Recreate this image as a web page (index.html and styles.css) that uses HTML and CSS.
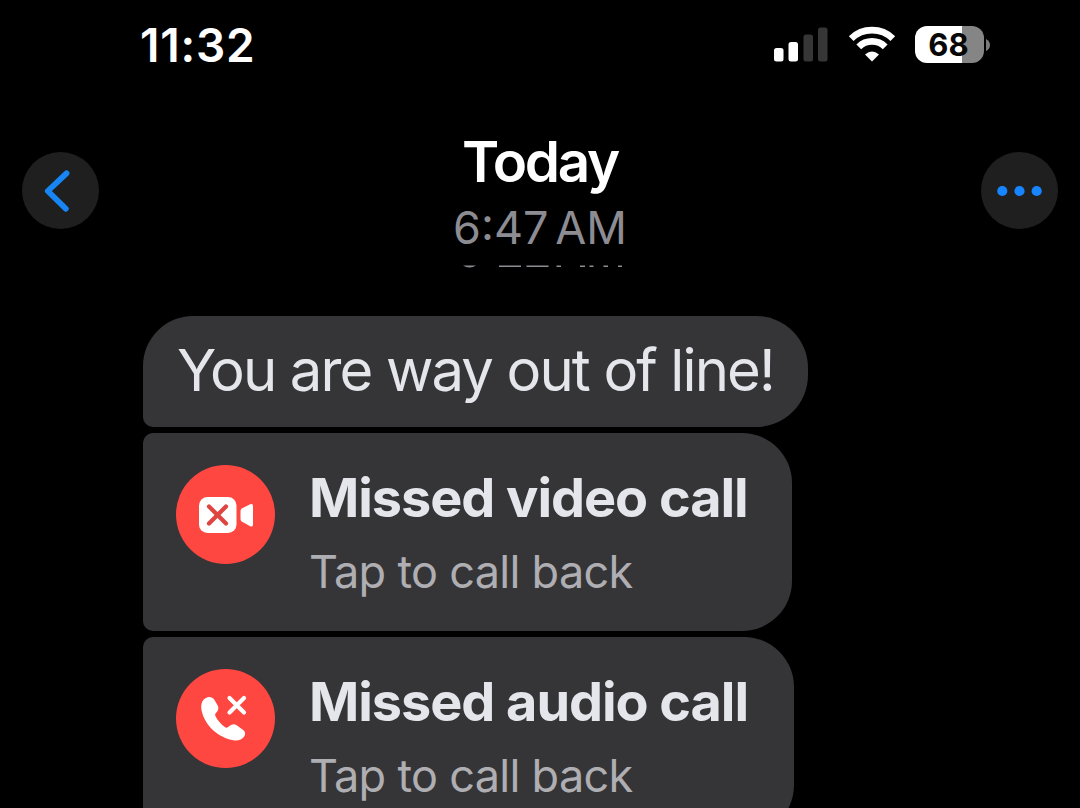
FILE: index.html
```
<!DOCTYPE html>
<html lang="en">
<head>
<meta charset="utf-8">
<title>Messages</title>
<link rel="stylesheet" href="styles.css">
</head>
<body>
<main class="phone">
  <div class="status">
    <span class="clock">11:32</span>
    <div class="indicators">
      <svg class="signal" width="54" height="36" viewBox="0 0 54 36">
        <rect x="0" y="22" width="9.5" height="13.500" rx="2.5" fill="#fff"/>
        <rect x="14.5" y="16" width="9.5" height="19.5" rx="2.5" fill="#fff"/>
        <rect x="29.5" y="8.500" width="9.5" height="27" rx="2.5" fill="#363636"/>
        <rect x="44" y="1.500" width="9.5" height="34" rx="2.5" fill="#363636"/>
      </svg>
      <svg class="wifi" width="48" height="36" viewBox="0 0 48 36">
        <g fill="none" stroke="#fff" stroke-width="6.8">
          <path d="M3.200 12.600a30 30 0 0 1 41.600 0"/>
          <path d="M10.800 20.800a18.800 18.800 0 0 1 26.400 0"/>
        </g>
        <path d="M24 35.600l-7-7.200q7-5.800 14 0z" fill="#fff"/>
      </svg>
      <div class="battery"><div class="level">68</div><svg class="cap" width="4" height="12" viewBox="0 0 4 12"><path d="M0 0q4 2 4 6t-4 6z" fill="#7b7b7b"/></svg></div>
    </div>
  </div>
  <header class="nav">
    <button class="round" aria-label="Back"><svg width="77" height="77" viewBox="0 0 77 77"><path d="M44.500 21.300L25.800 39 43.800 56.800" fill="none" stroke="#1785f3" stroke-width="5.800" stroke-linecap="round" stroke-linejoin="round"/></svg></button>
    <div class="heading">
      <h1 class="day">Today</h1>
      <div class="time">6:47 AM</div>
      <!-- bottom edge of the previous timestamp rolling out of view -->
      <svg class="sliver" width="172" height="3" viewBox="0 0 172 3" fill="#8d8c92">
        <path d="M9 .5h13q-3 2-6.500 2t-6.500-2z"/>
        <path d="M45 .5h22v1.600H45zM72.500 .5h22v1.600h-22zM102.500 .5h4.500v1.600h-4.500zM126 .5h5v1.600h-5zM135.500 .5h4v1.600h-4zM149.500 .5h4.500v1.600h-4.500zM164 .5h4v1.600h-4z"/>
      </svg>
    </div>
    <button class="round" aria-label="More"><svg width="77" height="77" viewBox="0 0 77 77" fill="#1785ff"><circle cx="21.3" cy="39" r="5.1"/><circle cx="38.500" cy="39" r="5.1"/><circle cx="55.700" cy="39" r="5.1"/></svg></button>
  </header>
  <section class="thread">
    <div class="bubble text">You are way out of line!</div>
    <div class="bubble call video">
      <svg class="badge" width="99" height="99" viewBox="0 0 99 99">
        <circle cx="49.500" cy="49.500" r="49.500" fill="#ff4741"/>
        <rect x="23" y="32" width="37.5" height="36" rx="8.500" fill="#fff"/>
        <path d="M33 41.500l17 17M50 41.500l-17 17" stroke="#df4540" stroke-width="4.200" stroke-linecap="round"/>
        <path d="M64.500 46q0-1.500 1.200-2.500l8.500-4.300q2.800-1 2.800 1.500v19q0 2.500-2.800 1.500l-8.500-4.700q-1.200-1-1.200-2.500z" fill="#fff"/>
      </svg>
      <div class="copy"><div class="title">Missed video call</div><div class="hint">Tap to call back</div></div>
    </div>
    <div class="bubble call audio">
      <svg class="badge" width="99" height="99" viewBox="0 0 99 99">
        <circle cx="49.500" cy="49.500" r="49.500" fill="#ff4741"/>
        <path d="M29 29.500c-3.500 2.500-4.500 7-3.300 12.500 3.300 15 17.300 27 31.800 29.300 4.500.7 8.500-.8 10.700-3.900 1.700-2.500 1-5-1-6.500l-6.200-4.400c-2.500-1.800-5-1.500-7.200.3l-2 1.500c-1 .7-2 .5-3-.2-4-2.900-7.200-6.700-9.400-11.100-.5-1.100-.3-2 .5-2.900l1.500-1.900c1.300-1.900 1.200-4.100 0-6.200l-3.200-5.500c-2-3.100-6.200-3.300-9.200-1z" fill="#fff"/>
        <path d="M53.500 29l14.500 14.500M68 29L53.500 43.500" stroke="#fff" stroke-width="4.200" stroke-linecap="round"/>
      </svg>
      <div class="copy"><div class="title">Missed audio call</div><div class="hint">Tap to call back</div></div>
    </div>
  </section>
</main>
</body>
</html>
```
FILE: styles.css
```
* { box-sizing: border-box; }
body { margin: 0; background: #000; font-family: Inter, "Liberation Sans", sans-serif; }
.phone { width: 1080px; height: 808px; overflow: hidden; display: flex; flex-direction: column; background: #000; }
.status { flex: none; height: 128px; padding: 17px 90px 0 140px; display: flex; justify-content: space-between; align-items: flex-start; }
.clock { color: #fff; font-size: 46px; line-height: 56px; font-weight: 600; letter-spacing: 0.8px; white-space: nowrap; }
.indicators { display: flex; padding-top: 9px; }
.signal { margin-right: 20px; }
.wifi { margin-right: 19px; }
.battery { display: flex; align-items: center; gap: 2px; height: 37px; }
.level { width: 69px; height: 37px; border-radius: 12px; background: linear-gradient(90deg, #fff 47px, #858585 47px); color: #080808; font-size: 31px; line-height: 38px; font-weight: 700; text-align: center; padding-right: 2px; }
.nav { flex: none; height: 188px; padding: 0 22px; display: flex; justify-content: space-between; align-items: flex-start; }
.round { width: 77px; height: 77px; margin: 24px 0 0; padding: 0; border: 0; border-radius: 50%; background: #1f1f1f; display: block; }
.round svg { display: block; }
.heading { display: flex; flex-direction: column; align-items: center; white-space: nowrap; }
.day { margin: 0; color: #fff; font-size: 56.5px; line-height: 68px; font-weight: 600; letter-spacing: -2.3px; }
.time { color: #8d8c92; font-size: 45px; line-height: 54px; padding-top: 5px; word-spacing: -6px; }
.sliver { display: block; margin-top: 10px; }
.thread { flex: none; padding-left: 143px; display: flex; flex-direction: column; align-items: flex-start; gap: 6px; }
.bubble { flex: none; background: #353537; white-space: nowrap; }
.text { width: 665px; height: 111px; border-radius: 50px 52px 52px 10px; padding: 18px 0 0 34px; color: #e5e6eb; font-size: 58px; line-height: 72px; letter-spacing: -1.87px; }
.call { height: 198px; border-radius: 10px 50px 50px 10px; padding: 32px 0 0 33px; display: flex; gap: 34px; align-items: flex-start; }
.video { width: 649px; }
.audio { width: 651px; }
.title { color: #e5e6eb; font-size: 54px; line-height: 66px; font-weight: 700; letter-spacing: -1.05px; }
.hint { color: #aeaeb3; font-size: 45px; line-height: 54px; padding-top: 14px; letter-spacing: -0.7px; }
```
